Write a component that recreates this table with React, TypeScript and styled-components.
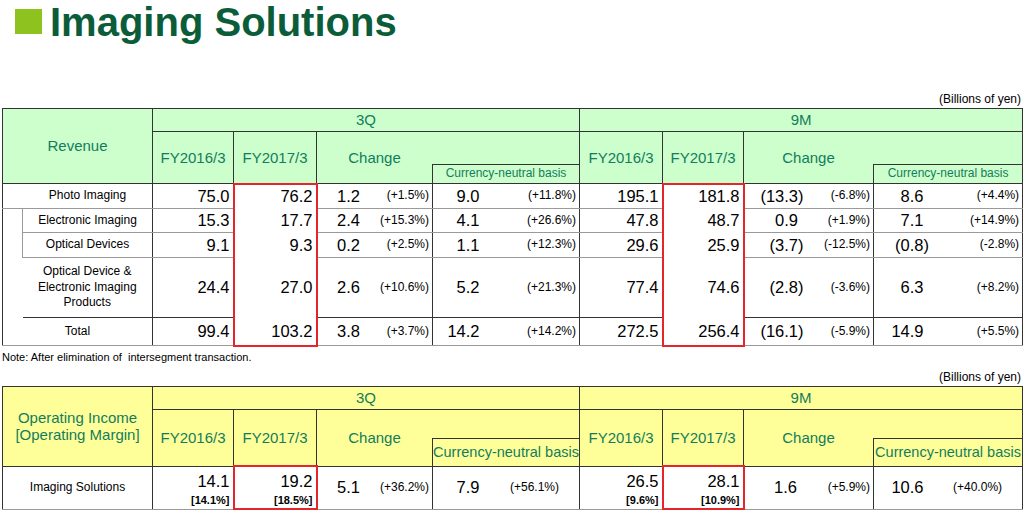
import React from "react";
import styled, { createGlobalStyle, css } from "styled-components";

const RED = "#e3262b";
const DARK = "#333";
const GRAY = "#9a9a9a";
const HEAD_TEXT = "#127d5c";

const Global = createGlobalStyle`
  html, body { margin: 0; padding: 0; background: #fff; }
  body { font-family: "Liberation Sans", Arial, sans-serif; color: #000; }
`;

const Page = styled.div`
  width: 1024px;
  height: 510px;
  padding: 0 2px;
  box-sizing: border-box;
  display: flex;
  flex-direction: column;
  overflow: hidden;
`;

const TitleRow = styled.div`
  display: flex;
  align-items: flex-start;
  gap: 8px;
  padding-left: 13px;
  height: 45px;
`;

const Square = styled.div`
  width: 27px;
  height: 25px;
  margin-top: 9px;
  background: #8dc21f;
`;

const Title = styled.h1`
  margin: 0;
  font-size: 40px;
  line-height: normal;
  font-weight: bold;
  color: #0b5d3a;
  letter-spacing: 0;
  white-space: nowrap;
`;

const Unit = styled.div<{ $mt: number }>`
  margin-top: ${(p) => p.$mt}px;
  text-align: right;
  font-size: 12px;
  line-height: 14px;
  padding-right: 1px;
`;

const Note = styled.div`
  margin-top: 4px;
  font-size: 11px;
  line-height: 13px;
`;

const Table = styled.table`
  margin-top: 2px;
  width: 1020px;
  border-collapse: collapse;
  table-layout: fixed;
  border: 1px solid ${DARK};
`;

const Tr = styled.tr<{ $h: number }>`
  height: ${(p) => p.$h}px;
`;

const Th = styled.th<{ $bg: string; $size?: number }>`
  background: ${(p) => p.$bg};
  color: ${HEAD_TEXT};
  font-weight: normal;
  font-size: ${(p) => p.$size ?? 15}px;
  line-height: 1.15;
  padding: 0;
  text-align: center;
  vertical-align: middle;
  border: 1px solid ${DARK};
  white-space: nowrap;
`;

const ChangeHead = styled(Th)`
  border-right: none;
`;

const BlankHead = styled(Th)`
  border-left: none;
`;

type Hl = "first" | "mid" | "last" | "only";

const Td = styled.td<{ $bottom?: "gray" | "dark" | "none"; $hl?: Hl }>`
  padding: 0;
  font-size: 16.5px;
  line-height: 1.1;
  vertical-align: middle;
  border-left: 1px solid ${DARK};
  border-right: 1px solid ${DARK};
  border-bottom: ${(p) =>
    p.$bottom === "none" ? "none" : `1px solid ${p.$bottom === "dark" ? DARK : GRAY}`};
  ${(p) =>
    p.$hl &&
    css`
      border-left: 2px solid ${RED};
      border-right: 2px solid ${RED};
      border-top: ${p.$hl === "first" || p.$hl === "only" ? `2px solid ${RED}` : "none"};
      border-bottom: ${p.$hl === "last" || p.$hl === "only" ? `2px solid ${RED}` : "none"};
    `}
`;

const LabelCell = styled(Td)<{ $edge?: "gray" | "none"; $indent?: number }>`
  font-size: 12px;
  line-height: 15.5px;
  text-align: center;
  padding-left: ${(p) => p.$indent ?? 0}px;
  ${(p) => p.$edge === "gray" && css`border-left: 1px solid ${GRAY};`}
  ${(p) => p.$edge === "none" && css`border-left: none;`}
`;

const SpacerCell = styled(Td)`
  border-right: none;
  border-bottom: none;
`;

const NumCell = styled(Td)`
  text-align: right;
  padding-right: 3px;
`;

const StackCell = styled(Td)`
  vertical-align: top;
  padding: 5px 3px 0 0;
`;

const Stack = styled.div`
  display: flex;
  flex-direction: column;
  align-items: flex-end;
  gap: 4px;
`;

const Big = styled.span`
  font-size: 16.5px;
  line-height: 18px;
`;

const Margin = styled.span`
  font-size: 11px;
  font-weight: bold;
  line-height: 13px;
`;

const ChangeBox = styled.div`
  display: flex;
  align-items: center;
`;

const Val = styled.span<{ $w: number; $hang: boolean }>`
  box-sizing: border-box;
  width: ${(p) => p.$w}px;
  flex: none;
  text-align: right;
  font-size: 16.5px;
  padding-right: ${(p) => (p.$hang ? "0.333em" : "0")};
`;

const Pct = styled.span<{ $left?: number }>`
  flex: 1;
  font-size: 12px;
  white-space: nowrap;
  text-align: ${(p) => (p.$left !== undefined ? "left" : "right")};
  padding-left: ${(p) => p.$left ?? 0}px;
  padding-right: 3px;
`;

const Change: React.FC<{ v: string; p: string; w: number; left?: number }> = ({ v, p, w, left }) => (
  <ChangeBox>
    <Val $w={w} $hang={!v.endsWith(")")}>{v}</Val>
    <Pct $left={left}>{p}</Pct>
  </ChangeBox>
);

const COLS = [20, 130, 81, 83, 116, 147, 83, 81, 130, 149];
const COLS2 = [150, 81, 83, 116, 147, 83, 81, 130, 149];

const GREEN = "#ccffcc";
const YELLOW = "#ffff99";

type Row = {
  label: string[];
  kind: "full" | "sub" | "merged" | "total";
  h: number;
  d: string[];
};

const rows: Row[] = [
  { label: ["Photo Imaging"], kind: "full", h: 25, d: ["75.0", "76.2", "1.2", "(+1.5%)", "9.0", "(+11.8%)", "195.1", "181.8", "(13.3)", "(-6.8%)", "8.6", "(+4.4%)"] },
  { label: ["Electronic Imaging"], kind: "sub", h: 24, d: ["15.3", "17.7", "2.4", "(+15.3%)", "4.1", "(+26.6%)", "47.8", "48.7", "0.9", "(+1.9%)", "7.1", "(+14.9%)"] },
  { label: ["Optical Devices"], kind: "sub", h: 25, d: ["9.1", "9.3", "0.2", "(+2.5%)", "1.1", "(+12.3%)", "29.6", "25.9", "(3.7)", "(-12.5%)", "(0.8)", "(-2.8%)"] },
  { label: ["Optical Device &", "Electronic Imaging", "Products"], kind: "merged", h: 60, d: ["24.4", "27.0", "2.6", "(+10.6%)", "5.2", "(+21.3%)", "77.4", "74.6", "(2.8)", "(-3.6%)", "6.3", "(+8.2%)"] },
  { label: ["Total"], kind: "total", h: 28, d: ["99.4", "103.2", "3.8", "(+3.7%)", "14.2", "(+14.2%)", "272.5", "256.4", "(16.1)", "(-5.9%)", "14.9", "(+5.5%)"] },
];

const Lines: React.FC<{ lines: string[] }> = ({ lines }) => (
  <>
    {lines.map((l, i) => (
      <React.Fragment key={i}>
        {i > 0 && <br />}
        {l}
      </React.Fragment>
    ))}
  </>
);

const HeaderBlock: React.FC<{ bg: string; label: string[]; cnbSize: number; h2: number; h3: number; labelSpan: number }> = ({
  bg,
  label,
  cnbSize,
  h2,
  h3,
  labelSpan,
}) => (
  <thead>
    <Tr $h={23}>
      <Th $bg={bg} colSpan={labelSpan} rowSpan={3}>
        <Lines lines={label} />
      </Th>
      <Th $bg={bg} colSpan={4}>3Q</Th>
      <Th $bg={bg} colSpan={4}>9M</Th>
    </Tr>
    <Tr $h={h2}>
      {[0, 1].map((k) => (
        <React.Fragment key={k}>
          <Th $bg={bg} rowSpan={2}>FY2016/3</Th>
          <Th $bg={bg} rowSpan={2}>FY2017/3</Th>
          <ChangeHead $bg={bg} rowSpan={2}>Change</ChangeHead>
          <BlankHead $bg={bg} />
        </React.Fragment>
      ))}
    </Tr>
    <Tr $h={h3}>
      <Th $bg={bg} $size={cnbSize}>Currency-neutral basis</Th>
      <Th $bg={bg} $size={cnbSize}>Currency-neutral basis</Th>
    </Tr>
  </thead>
);

const hlFor = (i: number, n: number): Hl => (n === 1 ? "only" : i === 0 ? "first" : i === n - 1 ? "last" : "mid");

const RevenueTable: React.FC = () => (
  <Table>
    <colgroup>
      {COLS.map((w, i) => (
        <col key={i} style={{ width: w }} />
      ))}
    </colgroup>
    <HeaderBlock bg={GREEN} label={["Revenue"]} cnbSize={12} h2={33} h3={19} labelSpan={2} />
    <tbody>
      {rows.map((r, i) => {
        const bottom = i === 3 ? "dark" : "gray";
        const hl = hlFor(i, rows.length);
        return (
          <Tr $h={r.h} key={i}>
            {(r.kind === "full" || r.kind === "total") && (
              <LabelCell colSpan={2} $bottom={bottom} $indent={r.kind === "full" ? 20 : 0}>
                <Lines lines={r.label} />
              </LabelCell>
            )}
            {r.kind === "sub" && i === 1 && <SpacerCell rowSpan={3} />}
            {r.kind === "sub" && (
              <LabelCell $edge="gray" $bottom="gray">
                <Lines lines={r.label} />
              </LabelCell>
            )}
            {r.kind === "merged" && (
              <LabelCell $edge="none" $bottom={bottom}>
                <Lines lines={r.label} />
              </LabelCell>
            )}
            <NumCell $bottom={bottom}>{r.d[0]}</NumCell>
            <NumCell $bottom={bottom} $hl={hl}>{r.d[1]}</NumCell>
            <Td $bottom={bottom}>
              <Change v={r.d[2]} p={r.d[3]} w={48} />
            </Td>
            <Td $bottom={bottom}>
              <Change v={r.d[4]} p={r.d[5]} w={52} />
            </Td>
            <NumCell $bottom={bottom}>{r.d[6]}</NumCell>
            <NumCell $bottom={bottom} $hl={hl}>{r.d[7]}</NumCell>
            <Td $bottom={bottom}>
              <Change v={r.d[8]} p={r.d[9]} w={59} />
            </Td>
            <Td $bottom={bottom}>
              <Change v={r.d[10]} p={r.d[11]} w={55} />
            </Td>
          </Tr>
        );
      })}
    </tbody>
  </Table>
);

const Stacked: React.FC<{ v: string; m: string; hl?: Hl }> = ({ v, m, hl }) => (
  <StackCell $hl={hl}>
    <Stack>
      <Big>{v}</Big>
      <Margin>{m}</Margin>
    </Stack>
  </StackCell>
);

const IncomeTable: React.FC = () => (
  <Table>
    <colgroup>
      {COLS2.map((w, i) => (
        <col key={i} style={{ width: w }} />
      ))}
    </colgroup>
    <HeaderBlock bg={YELLOW} label={["Operating Income", "[Operating Margin]"]} cnbSize={14.5} h2={29} h3={28} labelSpan={1} />
    <tbody>
      <Tr $h={43}>
        <LabelCell>Imaging Solutions</LabelCell>
        <Stacked v="14.1" m="[14.1%]" />
        <Stacked v="19.2" m="[18.5%]" hl="only" />
        <Td>
          <Change v="5.1" p="(+36.2%)" w={48} />
        </Td>
        <Td>
          <Change v="7.9" p="(+56.1%)" w={52} left={25} />
        </Td>
        <Stacked v="26.5" m="[9.6%]" />
        <Stacked v="28.1" m="[10.9%]" hl="only" />
        <Td>
          <Change v="1.6" p="(+5.9%)" w={58} />
        </Td>
        <Td>
          <Change v="10.6" p="(+40.0%)" w={55} left={24} />
        </Td>
      </Tr>
    </tbody>
  </Table>
);

export default function App() {
  return (
    <>
      <Global />
      <Page>
        <TitleRow>
          <Square />
          <Title>Imaging Solutions</Title>
        </TitleRow>
        <Unit $mt={47}>(Billions of yen)</Unit>
        <RevenueTable />
        <Note>Note: After elimination of&nbsp; intersegment transaction.</Note>
        <Unit $mt={6}>(Billions of yen)</Unit>
        <IncomeTable />
      </Page>
    </>
  );
}
